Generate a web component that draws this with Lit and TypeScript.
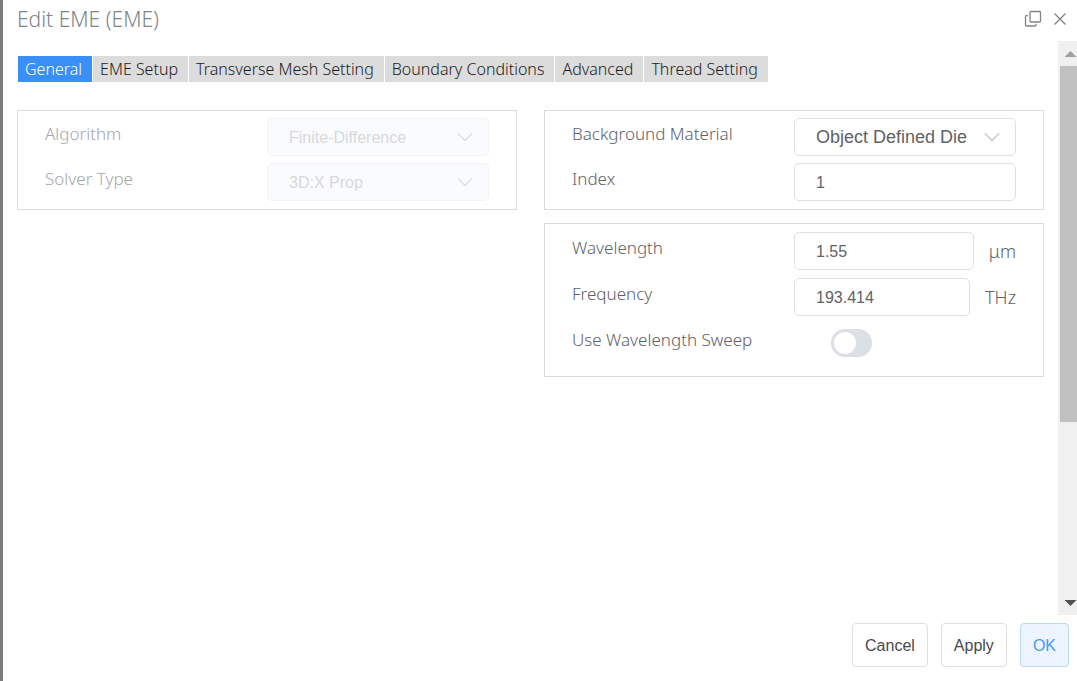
import { LitElement, html, css } from "lit";
import { customElement, state } from "lit/decorators.js";
import { classMap } from "lit/directives/class-map.js";

const TABS = [
  "General",
  "EME Setup",
  "Transverse Mesh Setting",
  "Boundary Conditions",
  "Advanced",
  "Thread Setting",
];

@customElement("app-root")
export class AppRoot extends LitElement {
  @state() private active = 0;

  static styles = css`
    :host {
      display: block;
      --ui: "Noto Sans", "Open Sans", sans-serif;
      --field: "Liberation Sans", Arial, sans-serif;
    }
    * {
      box-sizing: border-box;
    }
    button,
    input,
    select {
      margin: 0;
      font-family: var(--field);
    }
    .dialog {
      display: grid;
      grid-template-rows: auto 1fr auto;
      min-height: 100vh;
      background: #fff;
      border-left: 3px solid #7b7b7b;
      font-family: var(--ui);
      font-weight: 300;
    }
    .header {
      display: flex;
      align-items: center;
      justify-content: space-between;
      height: 41px;
      padding: 0 10px 3px 14px;
    }
    .title {
      margin: 0;
      font-size: 21px;
      line-height: 28px;
      font-weight: 300;
      color: #808388;
    }
    .tools {
      display: flex;
      align-items: center;
      gap: 11px;
    }
    .tool {
      display: flex;
      padding: 0;
      border: 0;
      background: none;
      color: #808285;
    }
    .body {
      display: grid;
      grid-template-columns: 1fr 19px;
    }
    .content {
      padding: 15px 14px 0;
    }
    .tabs {
      display: flex;
      gap: 1px;
      padding-left: 1px;
      margin-bottom: 28px;
    }
    .tab {
      height: 26px;
      padding: 0 10px 0 7px;
      border: 0;
      background: #dcdcdc;
      color: #1c1c1c;
      font-family: var(--ui);
      font-weight: 300;
      font-size: 16px;
      line-height: 26px;
      white-space: nowrap;
    }
    .tab.on {
      background: #3a8ff7;
      color: #fff;
    }
    .columns {
      display: grid;
      grid-template-columns: 1fr 1fr;
      gap: 27px;
      align-items: start;
    }
    .stack {
      display: grid;
      gap: 13px;
    }
    .panel {
      display: grid;
      gap: 7px;
      padding: 7px 27px 8px;
      border: 1px solid #d9dbde;
    }
    .panel.roomy {
      gap: 8px;
      padding: 8px 27px 14px;
    }
    .row {
      display: grid;
      grid-template-columns: 1fr 1fr;
    }
    .label {
      font-size: 17px;
      line-height: 32px;
      color: #606266;
      white-space: nowrap;
    }
    .dim .label {
      color: #a4a6aa;
    }
    .control {
      display: flex;
      align-items: center;
      gap: 15px;
      min-width: 0;
      height: 38px;
    }
    .field {
      flex: 1;
      width: 100%;
      min-width: 0;
      height: 38px;
      padding: 0 21px;
      border: 1px solid #dcdfe6;
      border-radius: 5px;
      background: #fff;
      color: #606266;
      font-size: 16px;
      outline: none;
    }
    input.field {
      padding-top: 2px;
    }
    .pick {
      flex: 1;
      display: grid;
      grid-template-columns: 1fr 16px;
      align-items: center;
    }
    .pick .field {
      grid-area: 1 / 1 / 2 / 3;
      appearance: none;
      padding-right: 40px;
    }
    .pick .large {
      font-size: 18px;
    }
    .pick .field:disabled {
      border-color: #f1f3f6;
      background: #fafbfd;
      color: #d6d8dc;
      opacity: 1;
    }
    .chevron {
      grid-area: 1 / 1 / 2 / 3;
      justify-self: end;
      margin-right: 16px;
      color: #c4c7cd;
      pointer-events: none;
    }
    .dim .chevron {
      color: #dcdee2;
    }
    .unit {
      font-size: 18px;
      line-height: 28px;
      color: #606266;
    }
    .switch {
      display: flex;
      align-items: center;
      appearance: none;
      width: 41px;
      height: 28px;
      margin-left: 37px;
      padding: 3px;
      border-radius: 14px;
      background: #dcdfe6;
    }
    .switch::before {
      content: "";
      width: 22px;
      height: 22px;
      border-radius: 50%;
      background: #fff;
    }
    .switch:checked {
      justify-content: flex-end;
      background: #3a8ff7;
    }
    .scrollbar {
      display: grid;
      grid-template-rows: 25px 1fr 25px;
      background: #f0f0f0;
      padding-left: 2px;
    }
    .arrow {
      place-self: center end;
      display: block;
    }
    .thumb {
      height: 68%;
      background: #c1c1c1;
    }
    .footer {
      display: flex;
      justify-content: flex-end;
      gap: 13px;
      padding: 8px 8px 14px;
    }
    .btn {
      height: 44px;
      padding: 2px 12px 0;
      border: 1px solid #dcdfe6;
      border-radius: 4px;
      background: #fff;
      color: #48494c;
      font-size: 16px;
    }
    .btn.primary {
      border-color: #b9d7f8;
      background: #ecf5ff;
      color: #4a98f3;
    }
  `;

  private chevron() {
    return html`<svg class="chevron" width="16" height="10" viewBox="0 0 16 10" fill="none" stroke="currentColor" stroke-width="1.5" aria-hidden="true">
      <path d="M1 1.5 8 8.5 15 1.5" />
    </svg>`;
  }

  private select(id: string, label: string, value: string, disabled: boolean) {
    return html`<div class="row">
      <label class="label" for=${id}>${label}</label>
      <div class="control">
        <div class="pick">
          <select id=${id} class="field ${disabled ? "" : "large"}" ?disabled=${disabled}>
            <option>${value}</option>
          </select>
          ${this.chevron()}
        </div>
      </div>
    </div>`;
  }

  private input(id: string, label: string, value: string, unit = "") {
    return html`<div class="row">
      <label class="label" for=${id}>${label}</label>
      <div class="control">
        <input id=${id} class="field" type="text" .value=${value} />
        ${unit ? html`<span class="unit">${unit}</span>` : ""}
      </div>
    </div>`;
  }

  render() {
    return html`<main class="dialog">
      <header class="header">
        <h1 class="title">Edit EME (EME)</h1>
        <div class="tools">
          <button class="tool" aria-label="Maximize">
            <svg width="18" height="18" viewBox="0 0 18 18" fill="none" stroke="currentColor" stroke-width="1.3">
              <rect x="6" y="1.5" width="10.5" height="10.5" rx="1" />
              <path d="M3.8 5.5H2.7a1.2 1.2 0 0 0-1.2 1.2v8.1a1.2 1.2 0 0 0 1.2 1.2h8.1a1.2 1.2 0 0 0 1.2-1.2v-1" />
            </svg>
          </button>
          <button class="tool" aria-label="Close">
            <svg width="14" height="14" viewBox="0 0 14 14" fill="none" stroke="currentColor" stroke-width="1.3">
              <path d="M1.5 1.5 12.5 12.5M12.5 1.5 1.5 12.5" />
            </svg>
          </button>
        </div>
      </header>
      <div class="body">
        <div class="content">
          <div class="tabs" role="tablist">
            ${TABS.map(
              (name, i) => html`<button
                class=${classMap({ tab: true, on: i === this.active })}
                role="tab"
                aria-selected=${i === this.active ? "true" : "false"}
                @click=${() => (this.active = i)}
              >${name}</button>`
            )}
          </div>
          <div class="columns">
            <section class="panel dim">
              ${this.select("algorithm", "Algorithm", "Finite-Difference", true)}
              ${this.select("solver", "Solver Type", "3D:X Prop", true)}
            </section>
            <div class="stack">
              <section class="panel">
                ${this.select("material", "Background Material", "Object Defined Die", false)}
                ${this.input("index", "Index", "1")}
              </section>
              <section class="panel roomy">
                ${this.input("wavelength", "Wavelength", "1.55", "μm")}
                ${this.input("frequency", "Frequency", "193.414", "THz")}
                <div class="row">
                  <label class="label" for="sweep">Use Wavelength Sweep</label>
                  <div class="control">
                    <input id="sweep" class="switch" type="checkbox" role="switch" />
                  </div>
                </div>
              </section>
            </div>
          </div>
        </div>
        <div class="scrollbar" aria-hidden="true">
          <svg class="arrow" width="13" height="6" viewBox="0 0 13 6"><path d="M0.5 6 6.5 0 12.5 6Z" fill="#a0a0a0" /></svg>
          <div class="thumb"></div>
          <svg class="arrow" width="13" height="6" viewBox="0 0 13 6"><path d="M0.5 0H12.5L6.5 6Z" fill="#505050" /></svg>
        </div>
      </div>
      <footer class="footer">
        <button class="btn">Cancel</button>
        <button class="btn">Apply</button>
        <button class="btn primary">OK</button>
      </footer>
    </main>`;
  }
}
